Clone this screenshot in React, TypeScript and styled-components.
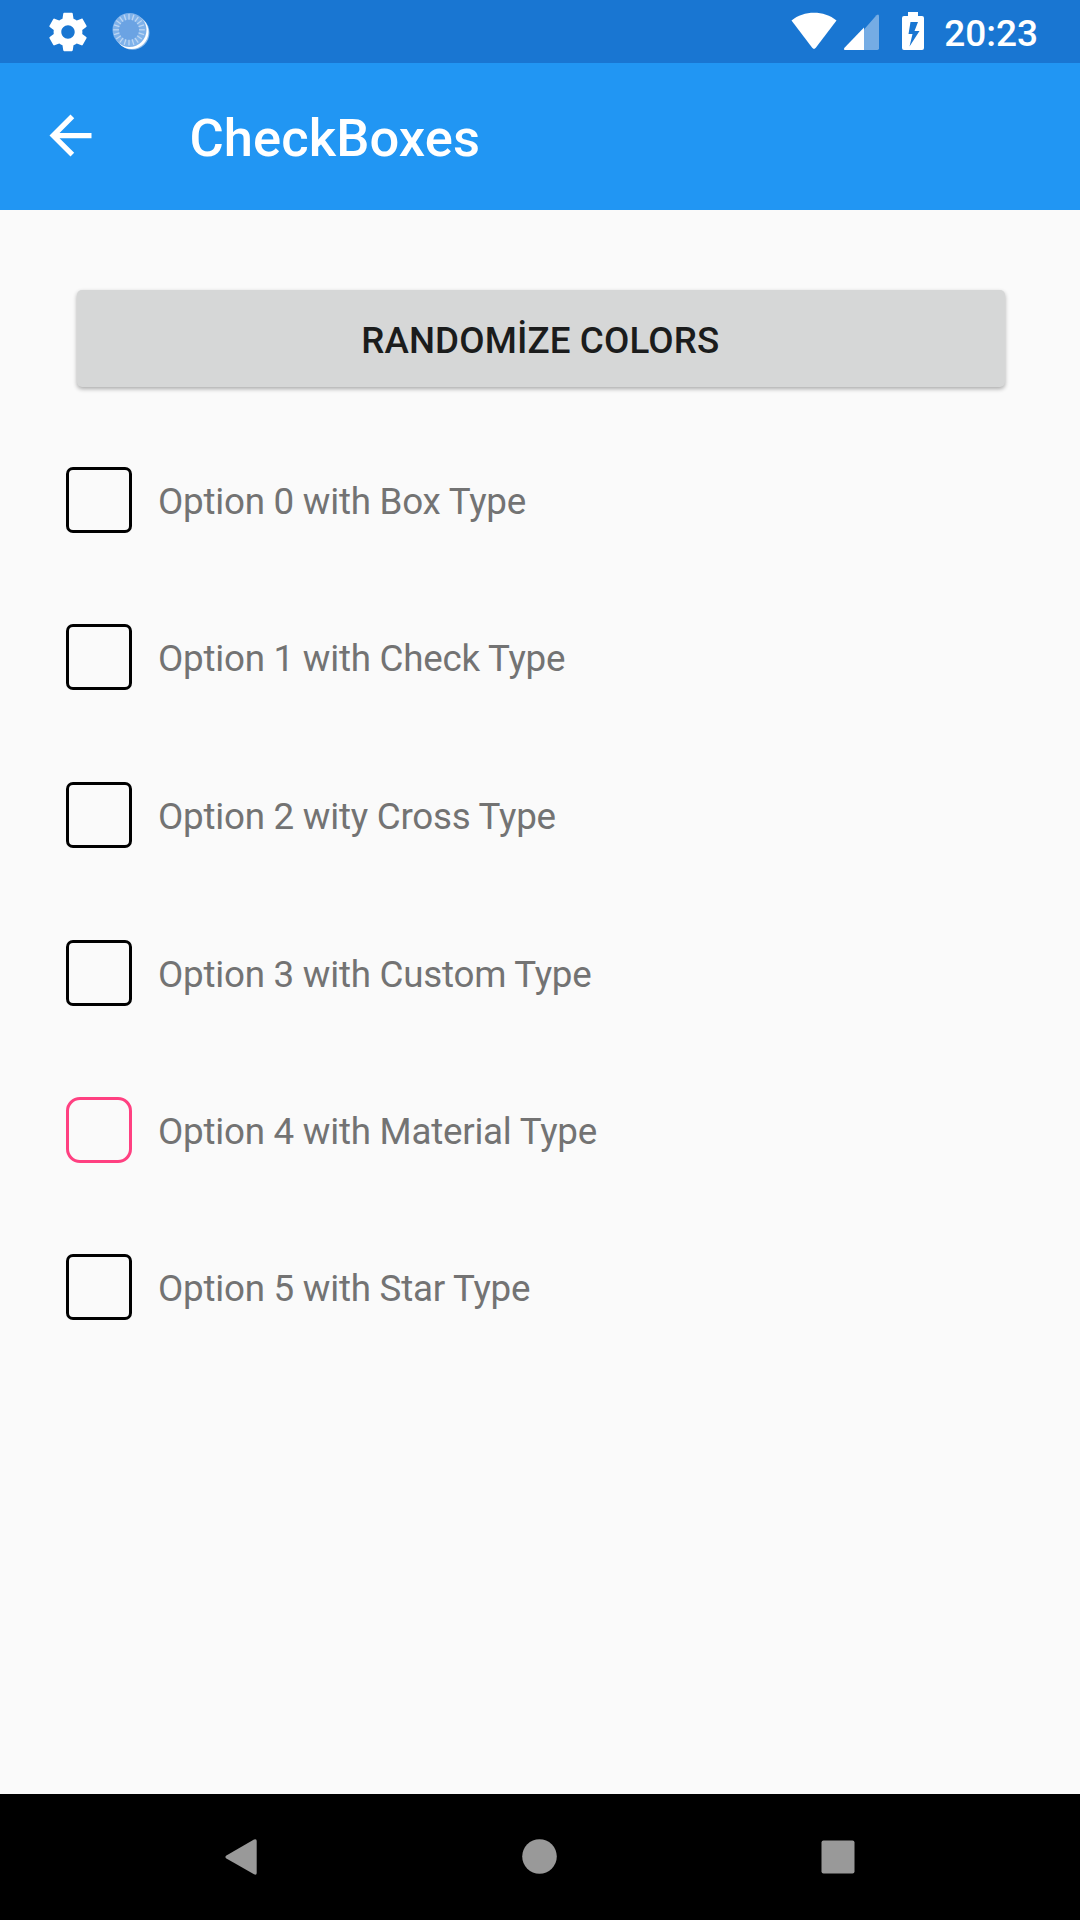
import React from "react";
import styled, { createGlobalStyle } from "styled-components";

const GlobalStyle = createGlobalStyle`
  * { box-sizing: border-box; }
  body {
    margin: 0;
    background: #fafafa;
    font-family: Roboto, "Noto Sans", sans-serif;
  }
`;

const Screen = styled.div`
  display: flex;
  flex-direction: column;
  width: 1080px;
  height: 1920px;
  background: #fafafa;
  overflow: hidden;
`;

const StatusBar = styled.header`
  display: flex;
  align-items: center;
  justify-content: space-between;
  height: 63px;
  padding: 0 42px 0 45px;
  background: #1976d2;
  color: #fff;
`;

const StatusGroup = styled.div<{ $gap: number }>`
  display: flex;
  align-items: center;
  gap: ${(p) => p.$gap}px;
`;

const Clock = styled.span`
  padding: 4px 0 0 9px;
  font-size: 37px;
  line-height: 45px;
  font-weight: 500;
`;

const AppBar = styled.nav`
  display: flex;
  align-items: center;
  gap: 87.5px;
  height: 147px;
  padding-left: 39px;
  background: #2196f3;
  color: #fff;
`;

const BackButton = styled.button`
  display: flex;
  width: 63px;
  height: 63px;
  margin-bottom: 2px;
  padding: 0;
  border: 0;
  background: none;
  color: inherit;
`;

const Title = styled.h1`
  margin: 0;
  padding-top: 2px;
  font-size: 52.5px;
  line-height: 62px;
  font-weight: 500;
  letter-spacing: 0.08px;
`;

const Content = styled.main`
  flex: 1;
  display: flex;
  flex-direction: column;
  padding: 80px 75px 0 66px;
`;

const RandomizeButton = styled.button`
  height: 97px;
  margin: 0 0 80px 10.5px;
  padding: 3px 1px 0 0;
  border: 0;
  border-radius: 5px;
  background: #d6d7d7;
  box-shadow: 0 2px 4px rgba(0, 0, 0, 0.32);
  color: #1b1c1c;
  font-family: inherit;
  font-size: 36.75px;
  font-weight: 500;
  letter-spacing: 0.12px;
`;

const OptionRow = styled.div<{ $space: number }>`
  display: flex;
  align-items: center;
  gap: 26px;
  height: 66px;
  margin-bottom: ${(p) => p.$space}px;
`;

const CheckBox = styled.span<{ $material?: boolean }>`
  width: 66px;
  height: 66px;
  border: 3px solid ${(p) => (p.$material ? "#ff4081" : "#000")};
  border-radius: ${(p) => (p.$material ? 14 : 7)}px;
`;

const OptionLabel = styled.span`
  padding-top: 4px;
  color: #737373;
  font-size: 36.75px;
  line-height: 44px;
  letter-spacing: -0.24px;
`;

const NavigationBar = styled.footer`
  display: flex;
  align-items: center;
  justify-content: space-between;
  height: 126px;
  padding: 0 225px;
  background: #000;
  color: #999;
`;

const options = [
  { label: "Option 0 with Box Type", space: 91 },
  { label: "Option 1 with Check Type", space: 92 },
  { label: "Option 2 wity Cross Type", space: 92 },
  { label: "Option 3 with Custom Type", space: 91 },
  { label: "Option 4 with Material Type", space: 91, material: true },
  { label: "Option 5 with Star Type", space: 0 },
];

const rays = Array.from({ length: 20 }, (_, i) => (i * 360) / 20);

const GearIcon = () => (
  <svg width="46" height="46" viewBox="0 0 24 24" fill="currentColor">
    <path d="M19.43 12.98c.04-.32.07-.64.07-.98s-.03-.66-.07-.98l2.11-1.65c.19-.15.24-.42.12-.64l-2-3.46c-.12-.22-.39-.3-.61-.22l-2.49 1c-.52-.4-1.08-.73-1.69-.98l-.38-2.65C14.46 2.18 14.25 2 14 2h-4c-.25 0-.46.18-.49.42l-.38 2.65c-.61.25-1.17.59-1.69.98l-2.49-1c-.23-.09-.49 0-.61.22l-2 3.46c-.13.22-.07.49.12.64l2.11 1.65c-.04.32-.07.65-.07.98s.03.66.07.98l-2.11 1.65c-.19.15-.24.42-.12.64l2 3.46c.12.22.39.3.61.22l2.49-1c.52.4 1.08.73 1.69.98l.38 2.65c.03.24.24.42.49.42h4c.25 0 .46-.18.49-.42l.38-2.65c.61-.25 1.17-.59 1.69-.98l2.49 1c.23.09.49 0 .61-.22l2-3.46c.12-.22.07-.49-.12-.64l-2.11-1.65zM12 15.5c-1.93 0-3.5-1.57-3.5-3.5s1.57-3.5 3.5-3.5 3.5 1.57 3.5 3.5-1.57 3.5-3.5 3.5z" />
  </svg>
);

const SyncDiscIcon = () => (
  <svg width="40" height="40" viewBox="0 0 40 40">
    <circle cx="21.5" cy="20.8" r="17" fill="#8dbbea" />
    <circle cx="20.5" cy="20" r="17" fill="#fff" />
    <circle cx="18.5" cy="18" r="17" fill="#7fb2ea" />
    <circle cx="18" cy="17.8" r="10.5" fill="#6ba3e3" />
    <g stroke="#bcd6f3" strokeWidth="1.3">
      {rays.map((angle) => (
        <line key={angle} x1="18" y1="7.8" x2="18" y2="2" transform={`rotate(${angle} 18 17.8)`} />
      ))}
    </g>
  </svg>
);

const SignalIcons = () => (
  <svg width="134" height="63" viewBox="791 0 134 63" fill="currentColor">
    <path d="M791.5 20.5C804 10.2 824 10.2 836.5 20.5L815.8 47.8Q814 50 812.2 47.8Z" />
    <path d="M864 29.5L876.5 15.3Q879 13.2 879 16.5V48.3Q879 50 877.3 50H864Z" opacity=".4" />
    <path d="M864 27.5V50H845Q843 49.8 844.5 47.7Z" />
    <path
      fillRule="evenodd"
      d="M908 12H918V16H922Q924 16 924 18V48Q924 50 922 50H904Q902 50 902 48V18Q902 16 904 16H908ZM910.5 22L908.5 34H912.5L909.5 46.5L919.5 31H914.5L918 22Z"
    />
  </svg>
);

const ArrowIcon = () => (
  <svg width="63" height="63" viewBox="0 0 24 24" fill="currentColor">
    <path d="M20 11H7.83l5.59-5.59L12 4l-8 8 8 8 1.41-1.41L7.83 13H20v-2z" />
  </svg>
);

const App = () => (
  <>
    <GlobalStyle />
    <Screen>
      <StatusBar>
        <StatusGroup $gap={20}>
          <GearIcon />
          <SyncDiscIcon />
        </StatusGroup>
        <StatusGroup $gap={10}>
          <SignalIcons />
          <Clock>20:23</Clock>
        </StatusGroup>
      </StatusBar>
      <AppBar>
        <BackButton aria-label="Back">
          <ArrowIcon />
        </BackButton>
        <Title>CheckBoxes</Title>
      </AppBar>
      <Content>
        <RandomizeButton>RANDOMİZE COLORS</RandomizeButton>
        {options.map((option) => (
          <OptionRow key={option.label} $space={option.space}>
            <CheckBox $material={option.material} />
            <OptionLabel>{option.label}</OptionLabel>
          </OptionRow>
        ))}
      </Content>
      <NavigationBar>
        <svg width="32" height="36" viewBox="0 0 32 36" fill="currentColor">
          <path d="M1.4 16.4L29 .6Q31.7-.5 31.7 2V34Q31.7 36.4 29 35.3L1.4 19.6Q-.7 18 1.4 16.4Z" />
        </svg>
        <svg width="36" height="36" viewBox="0 0 36 36" fill="currentColor">
          <circle cx="18.5" cy="17.5" r="17.3" />
        </svg>
        <svg width="34" height="36" viewBox="0 0 34 36" fill="currentColor">
          <rect x=".5" y="1.5" width="33" height="33" rx="2" />
        </svg>
      </NavigationBar>
    </Screen>
  </>
);

export default App;
